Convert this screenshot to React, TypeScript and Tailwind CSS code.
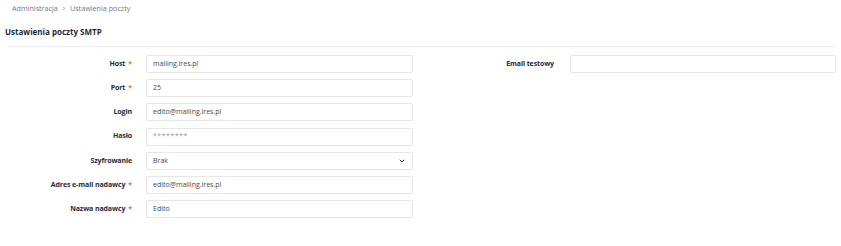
import { ChevronDown } from "lucide-react";

type Field = {
  label: string;
  value: string;
  required?: boolean;
  select?: boolean;
  placeholder?: boolean;
};

const fields: Field[] = [
  { label: "Host", value: "mailing.ires.pl", required: true },
  { label: "Port", value: "25", required: true },
  { label: "Login", value: "edito@mailing.ires.pl" },
  { label: "Hasło", value: "********", placeholder: true },
  { label: "Szyfrowanie", value: "Brak", select: true },
  { label: "Adres e-mail nadawcy", value: "edito@mailing.ires.pl", required: true },
  { label: "Nazwa nadawcy", value: "Edito", required: true },
];

const Row = ({ field }: { field: Field }) => (
  <div className="flex items-center h-[18px]">
    <div className="w-[141px] shrink-0 text-right font-bold text-[#1f2a3a] pr-[14px] whitespace-nowrap tracking-[-0.1px]">
      {field.label}
      {field.required && <span className="text-[#f26a3d] ml-[3px]">*</span>}
    </div>
    <div className="w-[267px] h-[18px] border border-[#e6e6e6] rounded-[2px] bg-white flex items-center px-[6px] justify-between">
      <span className={field.placeholder ? "text-[#9a9a9a] tracking-[0.5px]" : "text-[#4a4a4a]"}>
        {field.value}
      </span>
      {field.select && <ChevronDown size={8} strokeWidth={3} className="text-[#333]" />}
    </div>
  </div>
);

export default function App() {
  return (
    <div className="w-[841px] h-[246px] bg-white text-[7px] font-['Open_Sans',sans-serif] overflow-hidden">
      <div className="pl-[12px] pt-[1px] h-[16px] text-[#7a7a7a] flex items-center gap-[4px] text-[7.2px]">
        <span>Administracja</span>
        <span className="text-[#999]">&gt;</span>
        <span>Ustawienia poczty</span>
      </div>
      <div className="mx-[5px] mt-[10px] pb-[8px] border-b border-[#eeeeee] text-[8px] font-bold text-[#1f2a3a]">
        Ustawienia poczty SMTP
      </div>
      <div className="flex mt-[8px] pl-[5px]">
        <div className="flex flex-col gap-[6.2px]">
          {fields.map((f) => (
            <Row key={f.label} field={f} />
          ))}
        </div>
        <div className="ml-[8px] flex flex-col">
          <div className="flex items-center h-[18px]">
            <div className="w-[149px] shrink-0 text-right font-bold text-[#1f2a3a] pr-[16px] tracking-[-0.1px]">
              Email testowy
            </div>
            <div className="w-[266px] h-[18px] border border-[#e6e6e6] rounded-[2px] bg-white" />
          </div>
        </div>
      </div>
    </div>
  );
}
